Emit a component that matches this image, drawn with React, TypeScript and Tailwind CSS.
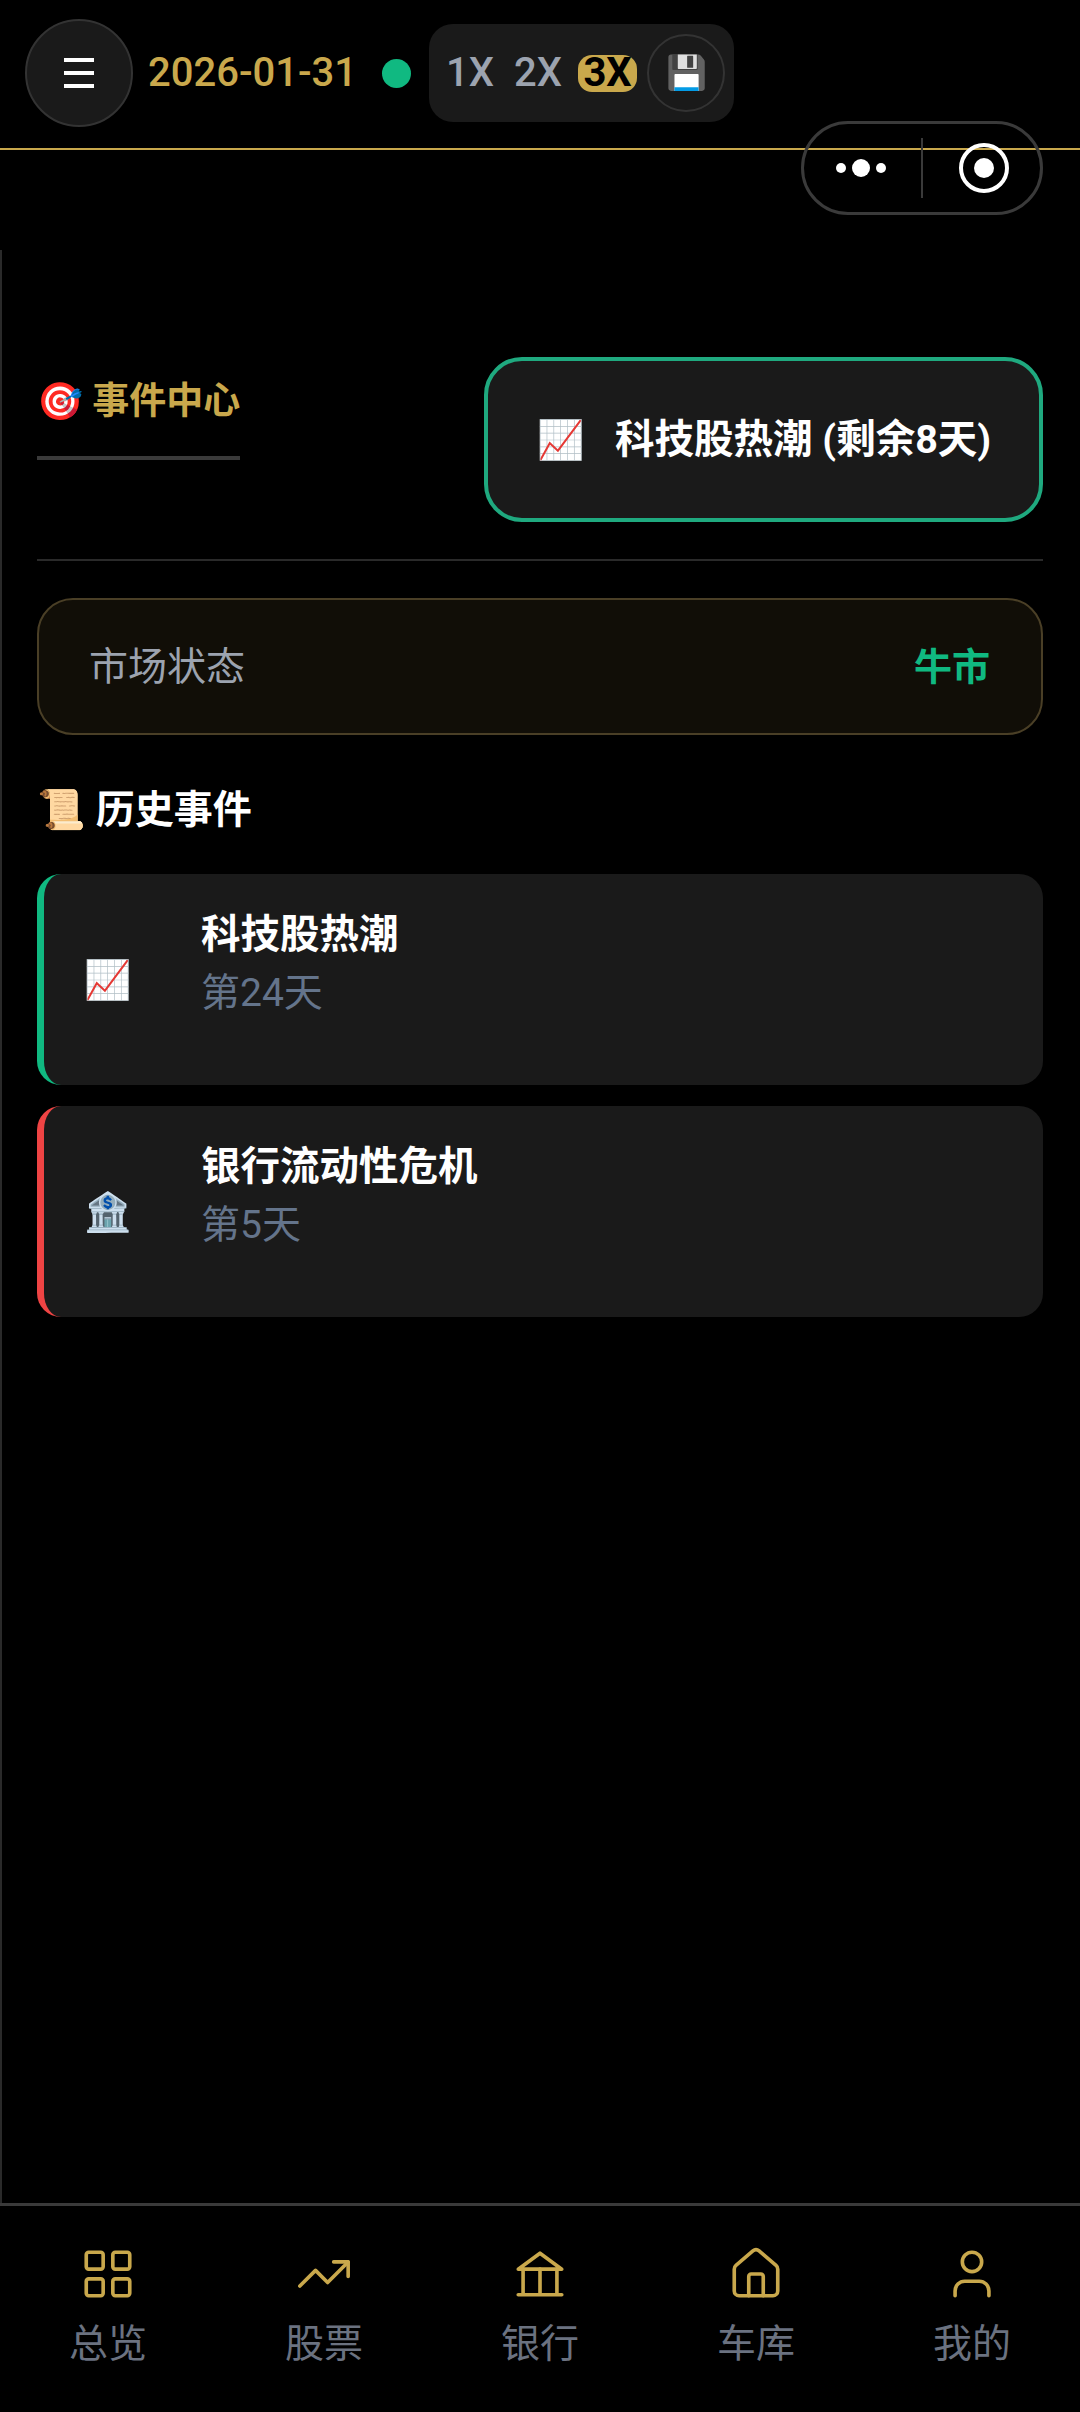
import { House, LayoutGrid, TrendingUp, User } from "lucide-react";

const FONT = "Roboto, 'Noto Sans CJK SC', sans-serif";

function BankIcon() {
  return (
    <svg viewBox="0 0 24 24" fill="none" stroke="currentColor" strokeWidth={1.5} strokeLinecap="round" strokeLinejoin="round" className="h-[58px] w-[58px]">
      <path d="M3 10 12 3.4 21 10Z" />
      <path d="M5 10v10.4M12 10v10.4M19 10v10.4" />
      <path d="M3 20.6h18" />
    </svg>
  );
}

const NAV = [
  { label: "总览", icon: <LayoutGrid size={58} strokeWidth={1.5} /> },
  { label: "股票", icon: <TrendingUp size={58} strokeWidth={1.5} /> },
  { label: "银行", icon: <BankIcon /> },
  { label: "车库", icon: <House size={58} strokeWidth={1.5} /> },
  { label: "我的", icon: <User size={58} strokeWidth={1.5} /> },
];

const HISTORY = [
  { emoji: "📈", name: "科技股热潮", day: "第24天", border: "border-[#10b981]" },
  { emoji: "🏦", name: "银行流动性危机", day: "第5天", border: "border-[#ef4444]" },
];

function Header() {
  return (
    <header className="flex h-[150px] items-center border-b-[2px] border-[#c9a84c] pb-[2px] pl-[25px]">
      <button className="flex h-[108px] w-[108px] flex-col items-center justify-center gap-[9px] rounded-full border-2 border-[#333333] bg-[#1a1a1a]">
        <span className="h-[4px] w-[30px] bg-white" />
        <span className="h-[4px] w-[30px] bg-white" />
        <span className="h-[4px] w-[30px] bg-white" />
      </button>
      <span className="ml-[15px] text-[40px] leading-[48px] font-medium text-[#c9a84c]">2026-01-31</span>
      <span className="ml-[25px] h-[29px] w-[29px] rounded-full bg-[#10b981]" />
      <div className="ml-[18px] flex h-[98px] w-[305px] items-center rounded-[24px] bg-[#1a1a1a] pl-[17px]">
        <span className="text-[40px] leading-[48px] font-medium text-[#9ca3af]">1X</span>
        <span className="ml-[20px] text-[40px] leading-[48px] font-medium text-[#9ca3af]">2X</span>
        <span className="ml-[16px] flex h-[37px] w-[59px] items-center justify-center rounded-[14px] bg-[#c9a84c] text-[40px] font-bold text-black">3X</span>
        <span className="ml-[10px] flex h-[78px] w-[78px] items-center justify-center rounded-full border-2 border-[#333333] text-[33px]">💾</span>
      </div>
    </header>
  );
}

function Capsule() {
  return (
    <div className="absolute top-[121px] left-[801px] flex h-[94px] w-[242px] items-center rounded-full border-[3px] border-[#3a3a3a]">
      <div className="flex w-[117px] items-center justify-center gap-[6px] pr-[3px]">
        <span className="h-[10px] w-[10px] rounded-full bg-white" />
        <span className="h-[18px] w-[18px] rounded-full bg-white" />
        <span className="h-[10px] w-[10px] rounded-full bg-white" />
      </div>
      <span className="h-[60px] w-[2px] bg-[#3a3a3a]" />
      <div className="flex flex-1 items-center justify-center pl-[5px]">
        <span className="flex h-[50px] w-[50px] items-center justify-center rounded-full border-[4px] border-white">
          <span className="h-[20px] w-[20px] rounded-full bg-white" />
        </span>
      </div>
    </div>
  );
}

export default function App() {
  return (
    <div className="relative flex h-[2412px] flex-col bg-black text-white" style={{ fontFamily: FONT }}>
      <Header />
      <Capsule />

      <main className="mt-[100px] flex-1 border-l-2 border-[#2a2a2a] pr-[37px] pl-[35px]">
        <div className="flex items-start justify-between border-b-2 border-[#2a2a2a] pt-[107px] pb-[37px]">
          <div className="mt-[17px] w-[203px] border-b-[4px] border-[#3a3a3a] pb-[26px] text-[37px] leading-[56px] font-bold whitespace-nowrap text-[#c9a84c]">
            🎯 事件中心
          </div>
          <div className="flex h-[165px] w-[559px] items-center rounded-[38px] border-[4px] border-[#1fa97f] bg-[#1a1a1a] pl-[49px]">
            <span className="pt-[1px] text-[38px]">📈</span>
            <span className="ml-[31px] text-[39.5px] font-bold whitespace-nowrap">科技股热潮 (剩余8天)</span>
          </div>
        </div>

        <div className="mt-[37px] flex h-[137px] items-center justify-between rounded-[36px] border-2 border-[#4a3f26] bg-[#110e07] pt-[2px] pr-[51px] pl-[50px]">
          <span className="text-[39px] text-[#9ca3af]">市场状态</span>
          <span className="text-[38px] font-bold text-[#10b981]">牛市</span>
        </div>

        <h2 className="mt-[47px] mb-[36px] text-[39px] leading-[56px] font-bold">📜 历史事件</h2>

        <div className="flex flex-col gap-[21px]">
          {HISTORY.map((item) => (
            <div key={item.name} className={`flex h-[211px] rounded-[24px] border-l-[7px] bg-[#1a1a1a] ${item.border}`}>
              <div className="flex w-[157px] items-center pt-[2px] pl-[40px] text-[38px]">{item.emoji}</div>
              <div className="pt-[33px]">
                <div className="text-[39.5px] leading-[56px] font-bold">{item.name}</div>
                <div className="pt-[2px] text-[39px] leading-[56px] text-[#64748b]">{item.day}</div>
              </div>
            </div>
          ))}
        </div>
      </main>

      <nav className="flex h-[209px] border-t-[3px] border-[#3a3a3a]">
        {NAV.map((item) => (
          <div key={item.label} className="flex flex-1 flex-col items-center pt-[39px]">
            <span className="flex h-[58px] w-[58px] items-center justify-center text-[#c9a84c]">{item.icon}</span>
            <span className="mt-[19px] text-[39px] leading-[44px] text-[#6b7280]">{item.label}</span>
          </div>
        ))}
      </nav>
    </div>
  );
}
